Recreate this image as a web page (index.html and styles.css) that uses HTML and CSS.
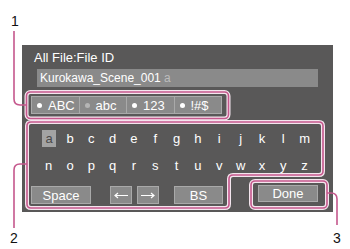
FILE: index.html
```html
<!DOCTYPE html>
<html lang="en">
<head>
    <meta charset="UTF-8">
    <title>All File:File ID</title>
    <link rel="stylesheet" href="styles.css">
</head>
<body>
    <div class="figure">
        <div class="panel">
            <div class="title">All File:File ID</div>
            <div class="field">Kurokawa_Scene_001 <span class="cursor">a</span></div>

            <div class="modes">
                <div class="mode"><span class="dot"></span>ABC</div>
                <div class="mode"><span class="dot dim"></span>abc</div>
                <div class="mode"><span class="dot"></span>123</div>
                <div class="mode"><span class="dot"></span>!#$</div>
            </div>

            <div class="keys">
                <span class="key selected">a</span>
                <span class="key">b</span>
                <span class="key">c</span>
                <span class="key">d</span>
                <span class="key">e</span>
                <span class="key">f</span>
                <span class="key">g</span>
                <span class="key">h</span>
                <span class="key">i</span>
                <span class="key">j</span>
                <span class="key">k</span>
                <span class="key">l</span>
                <span class="key">m</span>
                <span class="key">n</span>
                <span class="key">o</span>
                <span class="key">p</span>
                <span class="key">q</span>
                <span class="key">r</span>
                <span class="key">s</span>
                <span class="key">t</span>
                <span class="key">u</span>
                <span class="key">v</span>
                <span class="key">w</span>
                <span class="key">x</span>
                <span class="key">y</span>
                <span class="key">z</span>
            </div>

            <div class="bottom-row">
                <span class="btn space">Space</span>
                <span class="btn arrow left">
                    <svg width="14" height="7" viewBox="0 0 14 7"><path d="M14 3.5 H1 M4 1 L1 3.5 L4 6"/></svg>
                </span>
                <span class="btn arrow right">
                    <svg width="14" height="7" viewBox="0 0 14 7"><path d="M0 3.5 H13 M10 1 L13 3.5 L10 6"/></svg>
                </span>
                <span class="btn bs">BS</span>
                <span class="btn done">Done</span>
            </div>
        </div>

        <!-- Callouts -->
        <svg class="callouts" width="350" height="249" viewBox="0 0 350 249">
            <g class="halo">
                <rect x="26.5" y="92" width="202" height="26.5" rx="4"/>
                <path d="M31 122 H319 Q323 122 323 126 V171 Q323 175 319 175 H233 Q229 175 229 179 V204 Q229 208 225 208 H31 Q27 208 27 204 V126 Q27 122 31 122 Z"/>
                <rect x="251" y="181" width="76" height="27" rx="4"/>
            </g>
            <g class="line">
                <rect x="26.5" y="92" width="202" height="26.5" rx="4"/>
                <path d="M14 31 V99 Q14 105 20 105 H26.5"/>
                <path d="M31 122 H319 Q323 122 323 126 V171 Q323 175 319 175 H233 Q229 175 229 179 V204 Q229 208 225 208 H31 Q27 208 27 204 V126 Q27 122 31 122 Z"/>
                <path d="M14 228 V170 Q14 164 20 164 H27"/>
                <rect x="251" y="181" width="76" height="27" rx="4"/>
                <path d="M337 225 V199 Q337 193 331 193 H327"/>
            </g>
            <text x="11" y="26">1</text>
            <text x="10" y="243">2</text>
            <text x="333" y="243">3</text>
        </svg>
    </div>
</body>
</html>
```

FILE: styles.css
```css
body {
    margin: 0;
    background: #fff;
    font-family: "Liberation Sans", Arial, sans-serif;
}
.figure {
    position: relative;
    width: 350px;
    height: 249px;
    padding-top: 45px;
    box-sizing: border-box;
}
.panel {
    margin-left: 22px;
    width: 311px;
    height: 167px;
    background: #595858;
    color: #fff;
    box-sizing: border-box;
}
.title {
    padding: 5px 0 0 12px;
    height: 19px;
    font-size: 13px;
    line-height: 15px;
    box-sizing: border-box;
}
.field {
    margin: 5px 0 0 15px;
    width: 281px;
    height: 18px;
    background: #8a8a8a;
    font-size: 12px;
    line-height: 18px;
    padding-left: 3px;
    box-sizing: border-box;
}
.cursor {
    color: #bdbdbd;
}
.modes {
    display: flex;
    margin: 9px 0 0 9px;
    width: 191px;
}
.mode {
    display: flex;
    align-items: center;
    flex: 1;
    height: 18px;
    background: #8a8a8a;
    border: 1px solid #a9a9a9;
    box-sizing: border-box;
    font-size: 13px;
    padding-left: 5px;
}
.mode + .mode {
    border-left: none;
}
.dot {
    width: 5px;
    height: 5px;
    border-radius: 50%;
    background: #fff;
    margin-right: 6px;
}
.dot.dim {
    background: #b5b5b5;
}
.keys {
    display: grid;
    grid-template-columns: repeat(13, 21.33px);
    grid-auto-rows: 27px;
    margin: 11px 0 0 16px;
    font-size: 13px;
}
.key {
    display: flex;
    align-items: center;
    justify-content: center;
}
.key.selected {
    margin: 5px 3px 5px 4px;
    background: #a3a3a3;
    color: #4a4a4a;
}
.bottom-row {
    display: flex;
    margin: 7px 0 0 9px;
    height: 18px;
}
.btn {
    display: flex;
    align-items: center;
    justify-content: center;
    background: #8a8a8a;
    border: 1px solid #a9a9a9;
    box-sizing: border-box;
    font-size: 13px;
}
.space {
    width: 60px;
}
.arrow {
    width: 22px;
}
.arrow svg {
    fill: none;
    stroke: #fff;
    stroke-width: 1.2;
}
.left {
    margin-left: 19px;
}
.right {
    margin-left: 5px;
}
.bs {
    width: 49px;
    margin-left: 15px;
}
.done {
    width: 60px;
    height: 17px;
    margin: -1px 0 0 35px;
}
.callouts {
    position: absolute;
    left: 0;
    top: 0;
}
.callouts .halo {
    fill: none;
    stroke: #f4e6ee;
    stroke-width: 4;
}
.callouts .line {
    fill: none;
    stroke: #c5588d;
    stroke-width: 1.6;
}
.callouts text {
    font-family: "Liberation Sans", Arial, sans-serif;
    font-size: 14px;
    fill: #111;
}
```
